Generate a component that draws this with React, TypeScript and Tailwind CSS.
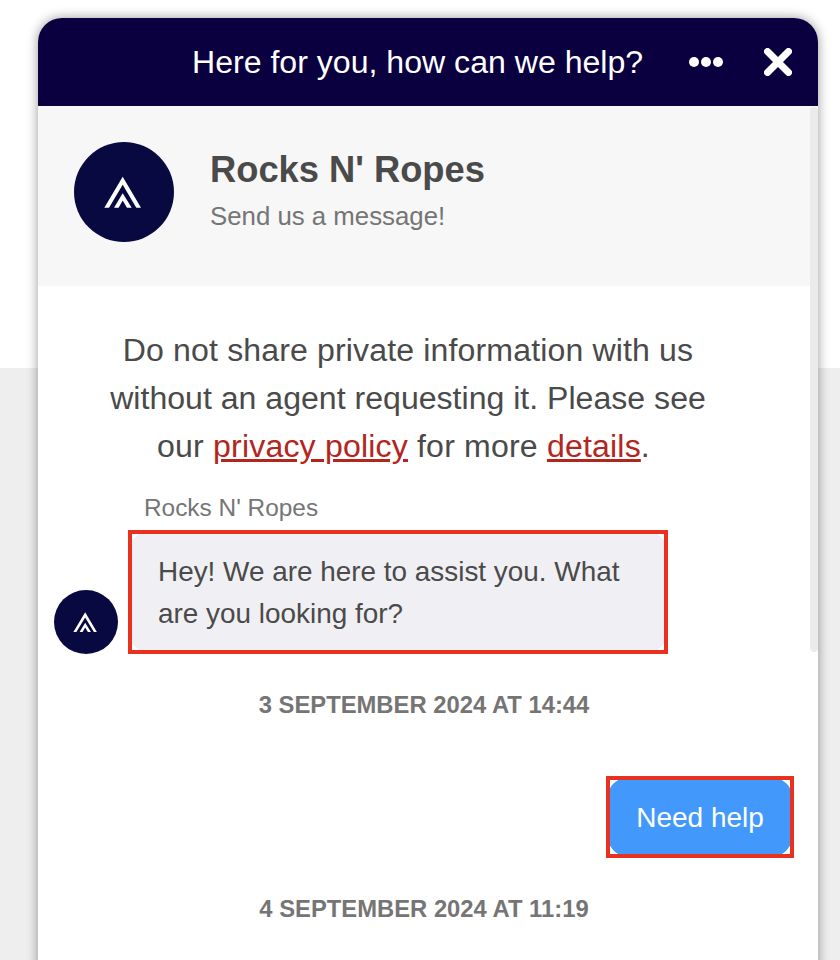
const font = "[font-family:'Liberation_Sans',Arial,sans-serif]";

function Logo({ size }: { size: number }) {
  return (
    <svg width={size} height={size} viewBox="0 0 100 100" aria-hidden="true">
      <circle cx="50" cy="50" r="50" fill="#090941" />
      <polygon fill="#fff" points="30.3,65.7 48.7,34.7 67,65.7 62.3,65.7 48.7,42.8 35,65.7" />
      <polygon fill="#fff" points="40,65.7 48.7,51.3 57.7,65.7 53,65.7 48.7,58.6 44.6,65.7" />
    </svg>
  );
}

export default function App() {
  return (
    <div className={`${font} h-[960px] w-[840px] overflow-hidden bg-[linear-gradient(#ffffff_368px,#eeeeee_368px)] pl-[38px] pt-[18px]`}>
      <div className="relative h-[1000px] w-[780px] rounded-t-[24px] bg-white shadow-[0_0_12px_rgba(0,0,0,0.4)]">
        <header className="flex h-[88px] items-center rounded-t-[24px] bg-[#0a0040] text-white">
          <div className="ml-[154px] w-[451px] whitespace-nowrap text-[32.1px] leading-none">Here for you, how can we help?</div>
          <div className="ml-[46px] flex gap-[2px]">
            <span className="h-[10px] w-[10px] rounded-full bg-white" />
            <span className="h-[10px] w-[10px] rounded-full bg-white" />
            <span className="h-[10px] w-[10px] rounded-full bg-white" />
          </div>
          <svg className="ml-[41px]" width="28" height="28" viewBox="0 0 28 28" aria-hidden="true">
            <path d="M3.5 3.5 L24.5 24.5 M24.5 3.5 L3.5 24.5" stroke="#fff" strokeWidth="7" strokeLinecap="round" />
          </svg>
        </header>

        <section className="flex h-[180px] bg-[#f7f7f7] pl-[36px] pt-[36px]">
          <Logo size={100} />
          <div className="ml-[36px]">
            <div className="mt-[6px] text-[36.3px] font-bold leading-[44px] text-[#4a4a4a]">Rocks N' Ropes</div>
            <div className="mt-[9px] text-[25.8px] leading-[30px] text-[#757575]">Send us a message!</div>
          </div>
        </section>

        <div className="w-[740px] pt-[40px] text-center text-[32.1px] leading-[48px] text-[#4a4a4a]">
          <p className="tracking-[0.13px]">Do not share private information with us</p>
          <p>without an agent requesting it. Please see</p>
          <p className="pr-[9px] tracking-[0.17px]">
            our <span className="text-[#b3261e] underline">privacy policy</span> for more{" "}
            <span className="text-[#b3261e] underline">details</span>.
          </p>
        </div>

        <div className="ml-[106px] mt-[23px] text-[24.4px] leading-[30px] text-[#757575]">Rocks N' Ropes</div>

        <div className="ml-[16px] mt-[7px] flex items-end">
          <Logo size={64} />
          <div className="ml-[10px] w-[540px] overflow-hidden border-[4px] border-[#e8321f]">
            <div className="-m-[4px] rounded-[24px] bg-[#f0eff4] px-[30px] pb-[19px] pt-[21px] text-[27.9px] leading-[42px] text-[#4a4a4a]">
              Hey! We are here to assist you. What are you looking for?
            </div>
          </div>
        </div>

        <div className="mt-[36px] w-[772px] text-center text-[23.8px] font-bold leading-[30px] text-[#757575]">
          3 SEPTEMBER 2024 AT 14:44
        </div>

        <div className="mr-[24px] mt-[56px] flex justify-end">
          <div className="overflow-hidden border-[4px] border-[#e8321f]">
            <div className="-m-[4px] flex h-[82px] w-[188px] items-center justify-center rounded-[26px] bg-[#4299fb] pt-[2px] text-[28px] text-white">
              Need help
            </div>
          </div>
        </div>

        <div className="mt-[36px] w-[772px] text-center text-[23.8px] font-bold leading-[30px] text-[#757575]">
          4 SEPTEMBER 2024 AT 11:19
        </div>

        <div className="absolute right-0 top-[89px] h-[545px] w-[8px] rounded-[4px] bg-[#ebebeb]" />
      </div>
    </div>
  );
}
